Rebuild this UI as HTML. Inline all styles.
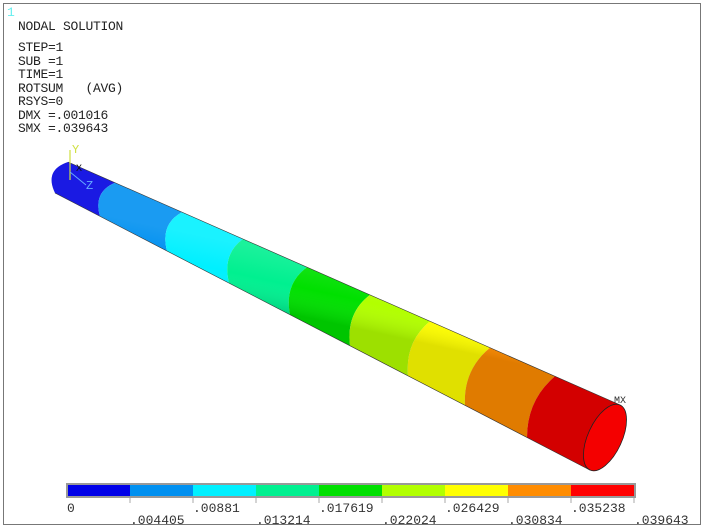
<!DOCTYPE html>
<html><head><style>
html,body{margin:0;padding:0;background:#fff;}
body{width:703px;height:529px;position:relative;overflow:hidden;font-family:"Liberation Mono",monospace;}
.t{position:absolute;font-size:13px;color:#222;line-height:13.5px;white-space:pre;letter-spacing:-0.3px}
</style></head><body>
<div style="position:absolute;left:3px;top:3px;width:696px;height:520px;border:1px solid #777;"></div>
<div class="t" style="left:7px;top:6px;color:#6ee;">1</div>
<div class="t" style="left:18px;top:20px;">NODAL SOLUTION</div>
<div class="t" style="left:18px;top:41px;">STEP=1
SUB =1
TIME=1
ROTSUM   (AVG)
RSYS=0
DMX =.001016
SMX =.039643</div>
<svg width="703" height="529" style="position:absolute;left:0;top:0">
<defs>
<linearGradient id="sh" gradientUnits="userSpaceOnUse" x1="330" y1="265" x2="318" y2="320">
<stop offset="0" stop-color="#fff" stop-opacity="0.1"/>
<stop offset="0.5" stop-color="#fff" stop-opacity="0"/>
<stop offset="1" stop-color="#000" stop-opacity="0.12"/>
</linearGradient>
</defs>
<path d="M55,193 Q44,170 68,162 L115,182.7 Q93,192 100,216.3 Z" fill="#0000e0"/>
<path d="M100,216.3 Q93,192 115,182.7 L182,212.2 Q160,224 167,251 Z" fill="#0090f0"/>
<path d="M167,251 Q160,224 182,212.2 L243,239 Q222,254 229,283.1 Z" fill="#00f0ff"/>
<path d="M229,283.1 Q222,254 243,239 L307,267.2 Q284,284 290,314.7 Z" fill="#00f090"/>
<path d="M290,314.7 Q284,284 307,267.2 L370,294.9 Q346,313 350,345.8 Z" fill="#00e000"/>
<path d="M350,345.8 Q346,313 370,294.9 L430,321.3 Q405,342 408,375.9 Z" fill="#b2ff00"/>
<path d="M408,375.9 Q405,342 430,321.3 L490,347.7 Q463,370 465,405.4 Z" fill="#ffff00"/>
<path d="M465,405.4 Q463,370 490,347.7 L555,376.3 Q527,400 527,437.5 Z" fill="#ff8c00"/>
<path d="M527,437.5 Q527,400 555,376.3 L620,404.9 L590,470.1 Z" fill="#f00000"/>
<path d="M55,193 Q44,170 68,162 L620,404.9 L590,470.1 Z" fill="url(#sh)"/>
<ellipse cx="605" cy="437.5" rx="35.8" ry="17" transform="rotate(114.8 605 437.5)" fill="#f40000" stroke="#222" stroke-width="0.8"/>
<line x1="68" y1="162" x2="620" y2="404.9" stroke="#333" stroke-width="0.6"/>
<line x1="55" y1="193" x2="590" y2="470.1" stroke="#333" stroke-width="0.6"/>
<line x1="70" y1="180" x2="70" y2="150" stroke="#cfe040" stroke-width="1.2"/>
<line x1="70" y1="172" x2="86" y2="185" stroke="#6af" stroke-width="1"/>
<text x="72" y="153" font-family="Liberation Mono" font-size="12" fill="#cfe040">Y</text>
<text x="86" y="189" font-family="Liberation Mono" font-size="12" fill="#6af">Z</text>
<text x="76" y="171" font-family="Liberation Mono" font-size="10" fill="#111">X</text>
<text x="614" y="403" font-family="Liberation Mono" font-size="10" fill="#333">MX</text>
<rect x="66" y="483" width="570" height="15" fill="#999"/>
<rect x="68" y="485" width="62" height="11" fill="#0000e8"/>
<rect x="130" y="485" width="63" height="11" fill="#0090f0"/>
<rect x="193" y="485" width="63" height="11" fill="#00f0ff"/>
<rect x="256" y="485" width="63" height="11" fill="#00f090"/>
<rect x="319" y="485" width="63" height="11" fill="#00e000"/>
<rect x="382" y="485" width="63" height="11" fill="#b2ff00"/>
<rect x="445" y="485" width="63" height="11" fill="#ffff00"/>
<rect x="508" y="485" width="63" height="11" fill="#ff8c00"/>
<rect x="571" y="485" width="63" height="11" fill="#ff0000"/>
<g stroke="#aaa" stroke-width="1">
<line x1="130" y1="498" x2="130" y2="503"/><line x1="193" y1="498" x2="193" y2="503"/><line x1="256" y1="498" x2="256" y2="503"/><line x1="319" y1="498" x2="319" y2="503"/><line x1="382" y1="498" x2="382" y2="503"/><line x1="445" y1="498" x2="445" y2="503"/><line x1="508" y1="498" x2="508" y2="503"/><line x1="571" y1="498" x2="571" y2="503"/><line x1="634" y1="498" x2="634" y2="503"/>
</g>
<g font-family="Liberation Mono" font-size="13" fill="#333">
<text x="67" y="512">0</text>
<text x="130" y="524">.004405</text>
<text x="193" y="512">.00881</text>
<text x="256" y="524">.013214</text>
<text x="319" y="512">.017619</text>
<text x="382" y="524">.022024</text>
<text x="445" y="512">.026429</text>
<text x="508" y="524">.030834</text>
<text x="571" y="512">.035238</text>
<text x="634" y="524">.039643</text>
</g>
</svg>
</body></html>
